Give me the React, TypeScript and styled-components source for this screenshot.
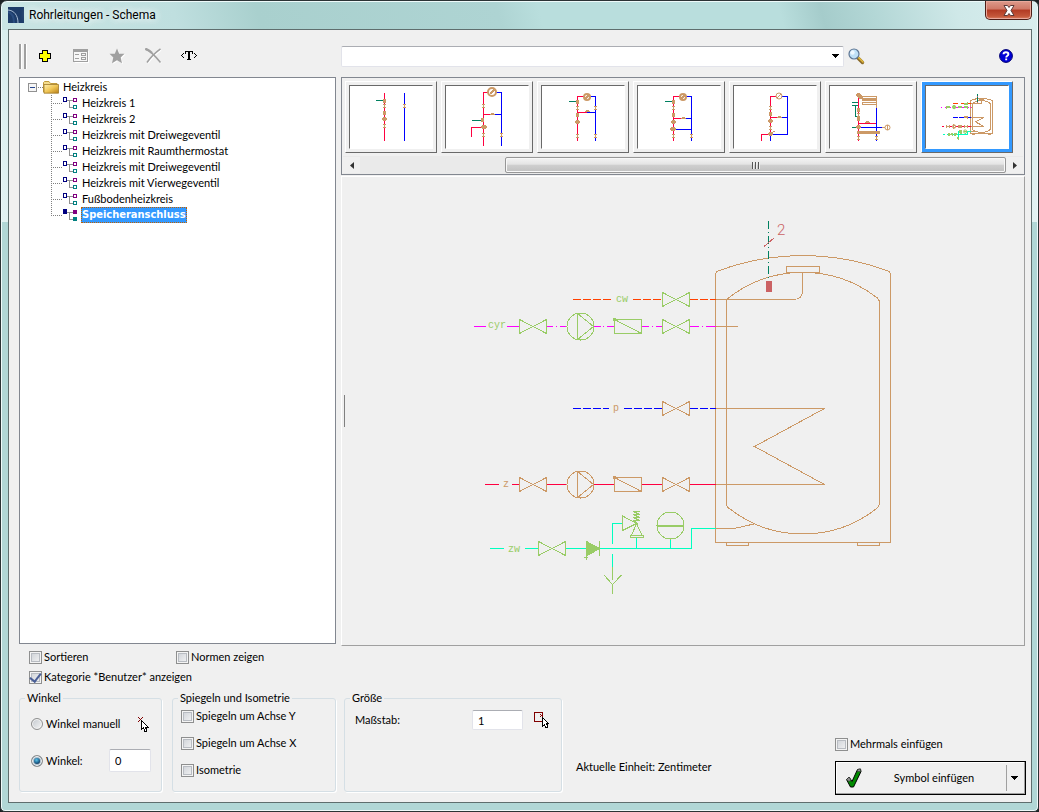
import React, { useState } from "react";
import styled, { createGlobalStyle, css } from "styled-components";

const TAN = "#cc9966";
const GREEN = "#99cc66";
const RED = "#ff0040";
const BLUE = "#0000ff";
const CYAN = "#00ffc0";
const PINE = "#008060";
const MAGENTA = "#ff00ff";
const ORANGE = "#ff4000";
const ROSE = "#cb6264";

const GlobalStyle = createGlobalStyle`
  * { box-sizing: border-box; }
  body {
    margin: 0;
    background: #1c2224;
    color: #000;
    font: 11px/16px Lato, "Liberation Sans", sans-serif;
  }
  button, input { font: inherit; color: inherit; }
`;

/* ---------- window frame ---------- */

const Window = styled.div`
  min-height: 100vh;
  display: flex;
  flex-direction: column;
  padding: 0 6px 8px 7px;
  border: 1px solid #2b3335;
  border-radius: 7px 7px 5px 5px;
  box-shadow: inset 0 0 0 1px #eefafa;
  background:
    linear-gradient(#d9eeee, #e2f2f2 192px, transparent 193px) 0 29px / 7px 192px no-repeat,
    linear-gradient(#d9eeee, #e2f2f2 192px, transparent 193px) 100% 29px / 7px 192px no-repeat,
    linear-gradient(75deg, #c9e5e4 0, #bfdfdf 17%, #a9d0ce 25%, #aed4d3 48%, #b9dedd 52%, #b9dedd 75%, #a5cccb 79%, #b3d7d6 84%, #cfe8e8 92%, #d9eeee 100%) 0 0 / 100% 29px no-repeat,
    #b1d7d6;
`;

const TitleBar = styled.header`
  height: 28px;
  display: flex;
  align-items: center;
  gap: 5px;
`;

const Title = styled.h1`
  flex: 1;
  margin: 0;
  font: 12px/20px Roboto, "Open Sans", sans-serif;
  text-shadow: 0 0 8px #fff, 0 0 8px #fff;
`;

const CloseButton = styled.button`
  align-self: flex-start;
  width: 47px;
  height: 19px;
  padding: 0;
  display: grid;
  place-items: center;
  border: 1px solid #4d1d16;
  border-top: 0;
  border-radius: 0 0 5px 5px;
  box-shadow: inset 0 0 0 1px #e9a99c;
  background: linear-gradient(#dd9a8b, #cf7867 45%, #b23a23 50%, #c4573a 85%, #dc8264);
`;

const Client = styled.main`
  flex: 1;
  display: flex;
  flex-direction: column;
  padding: 13px 6px 10px 10px;
  border: 1px solid #5f6e6e;
  background: #f0f0f0;
`;

/* ---------- header: tools and search ---------- */

const columns = css`
  display: grid;
  grid-template-columns: 317px minmax(0, 1fr);
  column-gap: 5px;
`;

const Header = styled.div`
  ${columns}
  height: 34px;
`;

const Toolbar = styled.div`
  display: flex;
  align-items: center;
  height: 26px;
  gap: 12px;
`;

const Grip = styled.span`
  width: 7px;
  height: 25px;
  margin-right: -5px;
  border: solid #a0a0a0;
  border-width: 0 2px;
  box-shadow: inset 1px 0 #fff, 1px 0 #fff;
`;

const IconButton = styled.button`
  width: 24px;
  height: 24px;
  padding: 0;
  display: grid;
  place-items: center;
  border: 0;
  background: none;
`;

const HelpButton = styled(IconButton)`
  margin-left: auto;
`;

const SearchBar = styled.div`
  display: flex;
  align-items: center;
  height: 26px;
  padding-right: 7px;
`;

const Combo = styled.div`
  flex: 1;
  max-width: 503px;
  height: 21px;
  display: flex;
  border: 1px solid #e2e3ea;
  border-top-color: #abadb3;
  border-radius: 2px;
  background: #fff;
`;

const ComboInput = styled.input`
  flex: 1;
  min-width: 0;
  border: 0;
  padding: 0 4px;
  background: none;
`;

const ComboArrow = styled.button`
  width: 17px;
  padding: 0;
  display: grid;
  place-items: center;
  border: 0;
  background: none;
`;

/* ---------- tree ---------- */

const Body = styled.div`
  ${columns}
  flex: 1;
`;

const TreePanel = styled.nav`
  margin-bottom: 2px;
  padding: 1px 8px;
  border: 1px solid #828790;
  background: #fff;
`;

const TreeRoot = styled.div`
  display: flex;
  align-items: center;
  height: 16px;
`;

const RootLabel = styled.span`
  padding-left: 4px;
`;

const TreeList = styled.ul`
  margin: 0;
  padding: 0 0 0 23px;
  list-style: none;
`;

const TreeRow = styled.li`
  display: flex;
  align-items: center;
  height: 16px;
  gap: 3px;
`;

const TreeLabel = styled.button<{ $selected: boolean }>`
  height: 16px;
  padding: 0 1px;
  border: 0;
  background: none;
  line-height: 16px;
  white-space: nowrap;
  ${(p) =>
    p.$selected &&
    css`
      background: #3399ff;
      color: #fff;
      font-family: "DejaVu Sans Condensed", "DejaVu Sans", sans-serif;
      font-weight: bold;
      outline: 1px dotted #c06000;
      outline-offset: -1px;
    `}
`;

/* ---------- thumbnails and preview ---------- */

const RightColumn = styled.section`
  display: flex;
  flex-direction: column;
  gap: 1px;
  min-width: 0;
`;

const ThumbPanel = styled.div`
  padding: 3px 1px 0;
  border: 1px solid #828790;
`;

const ThumbRow = styled.div`
  display: flex;
  gap: 4px;
  padding: 0 2px;
  overflow: hidden;
`;

const Thumb = styled.button<{ $selected: boolean }>`
  flex: none;
  width: 92px;
  height: 72px;
  padding: 3px;
  display: block;
  border: 1px solid;
  border-color: #fff #696969 #696969 #fff;
  background: ${(p) => (p.$selected ? "#3399ff" : "#f0f0f0")};
`;

const ThumbImage = styled.span`
  display: block;
  height: 64px;
  border: 1px solid;
  border-color: #696969 #fff #fff #696969;
  background: #fff;

  svg { display: block; }
`;

const ScrollBar = styled.div`
  display: flex;
  height: 18px;
  margin-top: 3px;
  padding: 1px 0;
  background: #eaeaea;
`;

const ScrollArrow = styled.button`
  width: 17px;
  padding: 0;
  display: grid;
  place-items: center;
  border: 0;
  background: #f0f0f0;
`;

const ScrollTrack = styled.div`
  flex: 1;
  display: flex;
  justify-content: flex-end;
`;

const ScrollThumb = styled.div`
  width: 77.5%;
  display: grid;
  place-items: center;
  border: 1px solid #979797;
  border-radius: 2px;
  box-shadow: inset 0 0 0 1px #f8f8f8;
  background: linear-gradient(#f4f4f4, #e4e4e4 45%, #cfcfcf 50%, #c0c0c0);
`;

const Preview = styled.div`
  flex: 1;
  display: flex;
  align-items: center;
  padding-left: 2px;
  border: 1px solid;
  border-color: #fff #a0a0a0 #a0a0a0 #fff;
`;

const Splitter = styled.span`
  width: 1px;
  height: 32px;
  background: #808080;
`;

const PreviewArea = styled.div`
  flex: 1;
  display: flex;
  justify-content: center;
`;

/* ---------- options ---------- */

const Options = styled.form`
  padding-top: 3px;
`;

const CheckGrid = styled.div`
  display: grid;
  grid-template-columns: 147px auto;
  justify-content: start;
  grid-auto-rows: 16px;
  row-gap: 4px;
  padding-left: 10px;
  margin-bottom: 6px;
`;

const Choice = styled.label`
  display: flex;
  align-items: center;
  gap: 2px;
  white-space: nowrap;
`;

const RadioChoice = styled(Choice)`
  gap: 3px;
`;

const Check = styled.input.attrs({ type: "checkbox" })`
  appearance: none;
  flex: none;
  display: grid;
  place-content: center;
  width: 13px;
  height: 13px;
  margin: 0;
  border: 1px solid #8e8f8f;
  box-shadow: inset 0 0 0 1px #f4f4f4, inset 0 0 0 2px #b8bcc2;
  background: linear-gradient(135deg, #cbcfd5, #f6f6f6);

  &:checked::after {
    content: "";
    width: 5px;
    height: 9px;
    margin-bottom: 2px;
    border: solid #4a5f97;
    border-width: 0 2px 2px 0;
    transform: rotate(38deg);
  }
`;

const Radio = styled.input.attrs({ type: "radio" })`
  appearance: none;
  flex: none;
  width: 12px;
  height: 12px;
  margin: 0;
  border: 1px solid #8e8f8f;
  border-radius: 50%;
  box-shadow: inset 0 0 0 1px #f4f4f4;
  background: linear-gradient(135deg, #c3c8ce, #f6f6f6);

  &:checked {
    box-shadow: inset 0 0 0 1px #f4f4f4, inset 0 0 0 2px #a9bccb;
    background: radial-gradient(circle at 45% 40%, #5cc4ea 0, #1a5f8c 3px, #12385a 4px);
  }
`;

const Bottom = styled.div`
  display: flex;
  align-items: stretch;
`;

const Group = styled.fieldset<{ $width: number; $gap: number }>`
  flex: none;
  width: ${(p) => p.$width}px;
  height: 101px;
  margin: 0 ${(p) => p.$gap}px 0 0;
  padding: 0 10px 0 8px;
  border: 1px solid #d5dfe5;
  border-radius: 3px;
  box-shadow: 1px 1px #fff;
`;

const Legend = styled.legend`
  height: 14px;
  margin-left: -3px;
  padding: 0 2px;
  line-height: 14px;
`;

const Row = styled.div`
  display: flex;
  align-items: center;
  justify-content: space-between;
`;

const AngleRows = styled.div`
  display: flex;
  flex-direction: column;
  gap: 16px;
  padding: 10px 0 0 3px;
`;

const MirrorRows = styled.div`
  display: flex;
  flex-direction: column;
  gap: 11px;
  padding-top: 3px;
`;

const SizeRow = styled.div`
  display: flex;
  align-items: center;
  padding: 5px 0 0 2px;
`;

const SizeLabel = styled.label`
  flex: 1;
`;

const NumberField = styled.input<{ $width: number; $height: number }>`
  width: ${(p) => p.$width}px;
  height: ${(p) => p.$height}px;
  padding: 0 5px;
  border: 1px solid #e2e3ea;
  border-top-color: #abadb3;
  border-radius: 2px;
  background: #fff;
`;

const PickButton = styled.button`
  width: 18px;
  height: 18px;
  padding: 0;
  display: grid;
  place-items: center;
  border: 0;
  background: none;
`;

const SizePick = styled(PickButton)`
  margin-left: 10px;
`;

const UnitText = styled.p`
  flex: 1;
  margin: 68px 0 0;
`;

const Actions = styled.div`
  flex: none;
  width: 191px;
  display: flex;
  flex-direction: column;
  justify-content: flex-end;
  gap: 9px;
  margin: 0 -1px -3px 0;
`;

const SplitButton = styled.div`
  height: 34px;
  display: flex;
  align-items: center;
  border: 1px solid #000;
  box-shadow: inset -1px -1px #a0a0a0, inset 1px 1px #fff;
`;

const InsertButton = styled.button`
  flex: 1;
  align-self: stretch;
  display: flex;
  align-items: center;
  padding: 0 0 0 9px;
  border: 0;
  background: none;
`;

const InsertLabel = styled.span`
  flex: 1;
  text-align: center;
`;

const MoreButton = styled.button`
  width: 19px;
  height: 26px;
  padding: 0 4px 0 0;
  display: grid;
  place-items: center;
  border: 0;
  border-left: 1px solid #a0a0a0;
  background: none;
`;

/* ---------- icons ---------- */

const CaretDown = () => (
  <svg width="8" height="4" viewBox="0 0 8 4" shapeRendering="crispEdges">
    <path d="M0 0H8L4 4Z" fill="#000" />
  </svg>
);

const AppIcon = () => (
  <svg width="16" height="16" viewBox="0 0 16 16">
    <rect width="16" height="16" fill="#1d3c69" />
    <path d="M0 5C4 6 6 10 6 16" fill="none" stroke="#2a4d80" strokeWidth="2" />
    <path d="M0 3C6 3.500 10 8 10 16" fill="none" stroke="#a9bdd6" strokeWidth="1" />
  </svg>
);

const CloseIcon = () => (
  <svg width="12" height="11" viewBox="0 0 12 11">
    <path d="M1 .5H4.500L6 2.500 7.500 .5H11L8 5.500 11 10.500H7.500L6 8.500 4.500 10.500H1L4 5.500Z" fill="#fff" stroke="#5b3a38" strokeWidth="1" />
  </svg>
);

const PlusIcon = () => (
  <svg width="14" height="14" viewBox="0 0 14 14" shapeRendering="crispEdges">
    <path d="M4.500 1.500H9.500V4.500H12.500V9.500H9.500V12.500H4.500V9.500H1.500V4.500H4.500Z" fill="#ffff00" stroke="#000" />
  </svg>
);

const FormIcon = () => (
  <svg width="16" height="14" viewBox="0 0 16 14" shapeRendering="crispEdges">
    <path d="M2 13.500H15.500V2" fill="none" stroke="#fff" />
    <rect x=".5" y=".5" width="14" height="12" fill="#f6f6f6" stroke="#a0a0a0" />
    <path d="M1 1.500H14" stroke="#a0a0a0" strokeWidth="2" />
    <path d="M2 5.500H6M2 9.500H6" stroke="#a0a0a0" />
    <path d="M8.500 4.500H12.500V6.500H8.500ZM8.500 8.500H12.500V10.500H8.500Z" fill="none" stroke="#a0a0a0" />
  </svg>
);

const StarIcon = () => (
  <svg width="17" height="17" viewBox="0 0 17 17">
    <path d="M9 1.500 11 6.500H16.500L12.500 10.500 14 16 9 13 4 16 5.500 10.500 1.500 6.500H7Z" fill="#fff" />
    <path d="M8 .5 10.200 5.800H15.500L11.700 9.500 13 15.200 8 12.200 3 15.200 4.300 9.500 .5 5.800H5.800Z" fill="#a0a0a0" />
  </svg>
);

const DeleteIcon = () => (
  <svg width="17" height="16" viewBox="0 0 17 16" fill="none">
    <path d="M2 2Q8 5 16 15M16 2Q8 8 3 15" stroke="#fff" strokeWidth="1.500" />
    <path d="M.5 .8Q7 4 15.500 14.500" stroke="#a0a0a0" strokeWidth="1.600" />
    <path d="M.3 .8Q4 2 7 5" stroke="#a0a0a0" strokeWidth="2.400" />
    <path d="M15.500 .8Q7 7 2 14.500" stroke="#a0a0a0" strokeWidth="1.600" />
  </svg>
);

const TextIcon = () => (
  <svg width="16" height="10" viewBox="0 0 16 10" shapeRendering="crispEdges" fill="#000">
    <path d="M2 2H3V3H2V4H1V5H2V6H3V7H2V6H1V5H0V4H1V3H2ZM13 2H14V3H15V4H16V5H15V6H14V7H13V6H14V5H15V4H14V3H13Z" />
    <path d="M4 0H12V3H11V1H9V8H10V9H6V8H7V1H5V3H4Z" />
  </svg>
);

const SearchIcon = () => (
  <svg width="17" height="17" viewBox="0 0 17 17">
    <path d="M9.500 9.500 14.500 14.500" stroke="#8a6a28" strokeWidth="3.400" strokeLinecap="round" />
    <path d="M10.500 9.500 15 14" stroke="#e2b93c" strokeWidth="1.600" strokeLinecap="round" />
    <circle cx="6" cy="6" r="5" fill="#bfe0f6" stroke="#5e7694" strokeWidth="1.200" />
    <circle cx="4.500" cy="4.500" r="2.200" fill="#eef8ff" />
  </svg>
);

const HelpIcon = () => (
  <svg width="14" height="14" viewBox="0 0 14 14">
    <circle cx="7" cy="7" r="6.400" fill="#0000d8" stroke="#000070" />
    <path d="M4.500 5.300C4.500 2.600 9.400 2.700 9.400 5.200 9.400 6.800 7.200 6.600 7.200 8.400M7.200 9.500V11.200" fill="none" stroke="#fff" strokeWidth="1.900" />
  </svg>
);

const ExpanderIcon = () => (
  <svg width="15" height="16" viewBox="0 0 15 16" shapeRendering="crispEdges">
    <rect x=".5" y="4.500" width="8" height="8" rx="1" fill="#f6f6f6" stroke="#919191" />
    <path d="M2 8.500H7" stroke="#28478f" />
    <path d="M10 8.500H15" stroke="#808080" strokeDasharray="1 1" />
  </svg>
);

const FolderIcon = () => (
  <svg width="16" height="13" viewBox="0 0 16 13">
    <defs>
      <linearGradient id="folder" x1="0" y1="0" x2="1" y2="1">
        <stop offset="0" stopColor="#fff0b0" />
        <stop offset=".5" stopColor="#f0c656" />
        <stop offset="1" stopColor="#b87f18" />
      </linearGradient>
    </defs>
    <path d="M.5 11V1.500L1.500 .5H6L7.500 2.500H14V11Z" fill="#f5dd8e" stroke="#c09a3c" />
    <path d="M1 3.500H15.500V12.200H1Z" fill="url(#folder)" stroke="#a07a2c" strokeWidth=".8" />
  </svg>
);

const BranchIcon = ({ last }: { last: boolean }) => (
  <svg width="27" height="16" viewBox="0 0 27 16" shapeRendering="crispEdges" fill="none">
    <path d={last ? "M.5 0V9" : "M.5 0V16"} stroke="#808080" strokeDasharray="1 1" />
    <path d="M2 8.500H12" stroke="#808080" strokeDasharray="1 1" />
    <path d="M16 5.500H22M18.500 5.500V12.500H22" stroke="#909090" />
    <rect x="12.500" y="2.500" width="3" height="4" stroke="#000080" fill={last ? "#000080" : "#fff"} />
    <rect x="22.500" y="3.500" width="3" height="3" stroke="#800080" fill={last ? "#800080" : "#fff"} />
    <rect x="22.500" y="10.500" width="3" height="3" stroke="#008080" fill={last ? "#008080" : "#fff"} />
  </svg>
);

const PickAngleIcon = () => (
  <svg width="18" height="18" viewBox="0 0 18 18" shapeRendering="crispEdges">
    <path d="M5 2 10 7M10 2 5 7" stroke="#800000" />
    <path d="M8.500 5.500V14.500L10.500 13 12 16.500H13.500V14.500L12.500 12.500H15.500Z" fill="#fff" stroke="#000" />
  </svg>
);

const PickSizeIcon = () => (
  <svg width="18" height="18" viewBox="0 0 18 18" shapeRendering="crispEdges">
    <path d="M1.500 1.500H9.500V10.500H1.500Z" fill="none" stroke="#800000" />
    <path d="M7 3 10 6M10 3 7 6" stroke="#800000" />
    <path d="M9.500 6.500V15.500L11.500 14 13 16.500H14V13.500L13.500 12.500H15.500Z" fill="#fff" stroke="#000" />
  </svg>
);

const TickIcon = () => (
  <svg width="17" height="21" viewBox="0 0 17 21">
    <path d="M1.500 11.500 4 9 7 13.500 12.500 1.500 15.500 1 16 3.500 8.500 19H5.500Z" fill="#008a00" stroke="#000" />
    <path d="M1.500 11.500 4 9 6 12 4 13.500ZM12.500 1.500 15.500 1 15.500 3.500 12.500 3.500Z" fill="#8f8f8f" stroke="#333" strokeWidth=".6" />
  </svg>
);

/* ---------- schema drawing ---------- */

type Point = { x: number; y: number };

const Valve = ({ x, y, color }: Point & { color: string }) => (
  <path d={`M${x} ${y - 7}V${y + 7}L${x + 27} ${y - 7}V${y + 7}Z`} stroke={color} />
);

const Pump = ({ x, y, color }: Point & { color: string }) => (
  <g stroke={color}>
    <circle cx={x} cy={y} r="13.500" />
    <path d={`M${x - 3} ${y - 13}V${y + 13}L${x + 13} ${y}Z`} />
  </g>
);

const CheckFlap = ({ x, y, color }: Point & { color: string }) => (
  <g stroke={color}>
    <path d={`M${x} ${y - 7}H${x + 27}V${y + 7}H${x}ZL${x + 27} ${y + 7}`} />
    <rect x={x - 1} y={y - 8} width="2" height="2" />
  </g>
);

const Schema = () => (
  <g fill="none">
    <g stroke={TAN}>
      <path d="M715.500 542.500V274Q715.500 272 718 271A243 243 0 0 1 888 271Q890.500 272 890.500 275V542.500Z" />
      <path d="M726.500 299.500A121 121 0 0 1 876 297Q879.500 299 879.500 303V504Q879 507 876 509A119 119 0 0 1 730 509Q726.500 507 726.500 504Z" />
      <path d="M786.500 272.500V266.500H819.500V272.500Z" fill="#f0f0f0" />
      <path d="M715.500 299.500H794Q802.500 299 802.500 291V272.500" />
      <path d="M715.500 326.500H738M715.500 408.500H824.500L754.500 446.500 824.500 484.500H715.500M715.500 528.500H734L754 524" />
      <path d="M726.500 542.500V545.500H748.500V542.500M857.500 542.500V545.500H879.500V542.500" />
    </g>

    <path d="M768.500 221V281" stroke={PINE} strokeDasharray="8 3 1 3" />
    <path d="M764 246.500 774 238" stroke={ROSE} />
    <rect x="766" y="281" width="6" height="11" fill={ROSE} />

    <path d="M573 299.500H612M633 299.500H662M690 299.500H716" stroke={ORANGE} strokeDasharray="8 2" />
    <Valve x={662.5} y={299.5} color={GREEN} />

    <path d="M474 326.500H486M507 326.500H519M547 326.500H553M556 326.500H557M560 326.500H567M594 326.500H601M603 326.500H604M607 326.500H614M642 326.500H649M652 326.500H653M656 326.500H662M690 326.500H699M702 326.500H703M706 326.500H716" stroke={MAGENTA} />
    <Valve x={519.5} y={326.5} color={GREEN} />
    <Pump x={580.5} y={326.5} color={GREEN} />
    <CheckFlap x={614.5} y={326.5} color={GREEN} />
    <Valve x={662.5} y={326.5} color={GREEN} />

    <path d="M573 408.500H609M624 408.500H662M690 408.500H716" stroke={BLUE} strokeDasharray="8 2" />
    <Valve x={662.5} y={408.5} color={TAN} />

    <path d="M485 484.500H499M512 484.500H519M547 484.500H567M594 484.500H614M642 484.500H662M690 484.500H716" stroke={RED} />
    <Valve x={519.5} y={484.5} color={TAN} />
    <Pump x={580.5} y={484.5} color={TAN} />
    <CheckFlap x={614.5} y={484.5} color={TAN} />
    <Valve x={662.5} y={484.5} color={TAN} />

    <path d="M490 548.500H504M525 548.500H538M566 548.500H586M600 548.500H691.500V528.500H716M612.500 543.500V523.500H622M612.500 554V567M636.500 538V548M670.500 540V548" stroke={CYAN} />
    <g stroke={GREEN}>
      <Valve x={538.5} y={548.5} color={GREEN} />
      <path d="M586.500 541.500V556L599.500 548.500Z" fill={GREEN} />
      <path d="M599.500 541V556M586.500 556V560M584 557.500H588" />
      <path d="M612.500 567V580M604 575 612.500 584.500 621.500 575M612.500 584V594" />
      <path d="M622.500 516V530.500L636.500 523.500Z" />
      <path d="M636.500 523.500 631.500 535.500H642L636.500 523.500M630.500 535.500H643.500V537.500H630.500Z" />
      <path d="M640 511.500H633L640 514.500H633L640 517.500H633L640 520.500H634L637 523.500" />
      <circle cx="670.500" cy="525.500" r="13.500" />
      <path d="M657 525.500H684M657 526.500H684" />
    </g>
  </g>
);

const SchemaText = styled.text`
  font: 10px "Liberation Mono", monospace;
`;

const CountText = styled.text`
  font: 300 15px Roboto, sans-serif;
`;

const SchemaDrawing = () => (
  <svg width="421" height="382" viewBox="474 220 421 382" role="img" aria-label="Speicheranschluss">
    <g shapeRendering="crispEdges">
      <Schema />
    </g>
    <CountText x="777" y="235" fill={ROSE}>2</CountText>
    <SchemaText x="616" y="302" fill={GREEN}>cw</SchemaText>
    <SchemaText x="488" y="328" fill={GREEN}>cyr</SchemaText>
    <SchemaText x="613" y="411" fill={TAN}>p</SchemaText>
    <SchemaText x="503" y="487" fill={TAN}>z</SchemaText>
    <SchemaText x="508" y="552" fill={GREEN}>zw</SchemaText>
  </svg>
);

const MiniSvg = styled.svg`
  fill: none;
  shape-rendering: crispEdges;

  circle { shape-rendering: auto; }
`;

const ScaledSchema = styled.g`
  * { vector-effect: non-scaling-stroke; }
`;

/* small fittings: v = valve, s = square, c = round valve, h = half dome */
const Fittings = ({ items }: { items: [string, number, number][] }) => (
  <g fill={TAN}>
    {items.map(([kind, x, y], i) => {
      if (kind === "v") return <path key={i} d={`M${x - 1} ${y - 2}h3v1h-3zM${x - 1} ${y + 1}h3v1h-3zM${x} ${y - 1}h1v2h-1z`} />;
      if (kind === "s") return <rect key={i} x={x - 1} y={y - 2} width="3" height="4" />;
      if (kind === "h") return <path key={i} d={`M${x - 2} ${y}h5v-1h-1v-1h-3v1h-1z`} />;
      return <path key={i} d={`M${x - 1} ${y - 2}h3v1h1v2h-1v1h-3v-1h-1v-2h1z`} />;
    })}
  </g>
);

const MiniPump = ({ x, y, r }: Point & { r: number }) => (
  <g stroke={TAN}>
    <circle cx={x} cy={y} r={r} fill="#fff" strokeWidth="2" />
    <path d={`M${x - 2} ${y + 2}L${x + 2} ${y - 2}`} strokeWidth="2" />
  </g>
);

const miniatures: React.ReactNode[] = [
  <>
    <path d="M34.500 7V55" stroke={RED} />
    <path d="M54.500 7V55" stroke={BLUE} />
    <path d="M26 14.500H34" stroke={PINE} />
    <Fittings items={[["s", 34, 15], ["v", 34, 20], ["s", 34, 27], ["c", 34, 33], ["v", 34, 40], ["v", 54, 20]]} />
  </>,
  <>
    <path d="M46 6.500H37.500V60M37 28.500H46M37 41.500H25.500V51" stroke={RED} />
    <path d="M46 6.500H55.500V60M46 28.500H55" stroke={BLUE} />
    <path d="M26 34.500H35" stroke={PINE} />
    <MiniPump x={46} y={6} r={4} />
    <Fittings items={[["v", 37, 20], ["h", 46, 29], ["s", 36, 34], ["c", 37, 41], ["c", 38, 41], ["v", 37, 49], ["v", 55, 49]]} />
  </>,
  <>
    <path d="M45 10.500H35.500V55M35 26.500H45" stroke={RED} />
    <path d="M45 10.500H53.500V55M45 26.500H53" stroke={BLUE} />
    <path d="M27 15.500H35" stroke={PINE} />
    <MiniPump x={45} y={11} r={3} />
    <Fittings items={[["s", 35, 16], ["v", 35, 22], ["v", 53, 22], ["h", 45, 26], ["s", 35, 29], ["c", 35, 36], ["v", 35, 50], ["v", 53, 50]]} />
  </>,
  <>
    <path d="M45 10.500H35.500V55M35 32.500H45" stroke={RED} />
    <path d="M45 10.500H53.500V55M45 32.500H53M35 43.500H53" stroke={BLUE} />
    <path d="M27 15.500H35" stroke={PINE} />
    <MiniPump x={45} y={11} r={3} />
    <Fittings items={[["s", 35, 16], ["v", 35, 22], ["h", 45, 33], ["s", 35, 29], ["c", 35, 36], ["c", 35, 43], ["c", 34, 43], ["v", 35, 50], ["v", 53, 50]]} />
  </>,
  <>
    <path d="M45 10.500H36.500V48.500H27.500V55M36 31.500H45" stroke={RED} />
    <path d="M45 10.500H53.500V48.500H36.500V55M45 31.500H53" stroke={BLUE} />
    <circle cx="45" cy="10" r="3" fill="#fff" stroke={TAN} />
    <path d="M43 12 47 8" stroke={TAN} />
    <Fittings items={[["v", 36, 22], ["s", 36, 28], ["c", 36, 35], ["h", 45, 32], ["v", 36, 42], ["c", 36, 48]]} />
    <path d="M36 48 41 45" stroke={TAN} />
  </>,
  <>
    <path d="M28.500 8V55M28 37.500H46" stroke={RED} />
    <path d="M46.500 22V55M28 41.500H55" stroke={BLUE} />
    <path d="M22 16.500H28M22 19.500H28M25.500 19V30M25 30.500H28M22 41.500H28" stroke={PINE} />
    <path d="M29 8V10.500H46.500V22M32 13.500H46M32 14.500H46M32 12.500H46M46 16.500H32V18.500H46" stroke={TAN} />
    <path d="M27 45H49V47H27Z" fill={TAN} stroke={TAN} />
    <circle cx="57.500" cy="41.500" r="2.500" stroke={TAN} />
    <path d="M52 41.500H55M57.500 39V44" stroke={TAN} />
    <Fittings items={[["c", 28, 9], ["c", 30, 11], ["s", 28, 24], ["s", 28, 33], ["v", 28, 29], ["h", 37, 37], ["c", 28, 41], ["v", 28, 52], ["v", 46, 52]]} />
  </>,
  <ScaledSchema transform="translate(15 8) scale(.123) translate(-474 -220)">
    <Schema />
  </ScaledSchema>,
];

const entries = [
  "Heizkreis 1",
  "Heizkreis 2",
  "Heizkreis mit Dreiwegeventil",
  "Heizkreis mit Raumthermostat",
  "Heizkreis mit Dreiwegeventil",
  "Heizkreis mit Vierwegeventil",
  "Fußbodenheizkreis",
  "Speicheranschluss",
];

export default function App() {
  const [angle, setAngle] = useState("0");
  const [scale, setScale] = useState("1");

  return (
    <>
      <GlobalStyle />
      <Window>
        <TitleBar>
          <AppIcon />
          <Title>Rohrleitungen - Schema</Title>
          <CloseButton aria-label="Schließen">
            <CloseIcon />
          </CloseButton>
        </TitleBar>

        <Client>
          <Header>
            <Toolbar>
              <Grip />
              <IconButton aria-label="Neu"><PlusIcon /></IconButton>
              <IconButton aria-label="Eigenschaften"><FormIcon /></IconButton>
              <IconButton aria-label="Favorit"><StarIcon /></IconButton>
              <IconButton aria-label="Löschen"><DeleteIcon /></IconButton>
              <IconButton aria-label="Text"><TextIcon /></IconButton>
            </Toolbar>
            <SearchBar>
              <Combo>
                <ComboInput aria-label="Suche" />
                <ComboArrow aria-label="Liste öffnen"><CaretDown /></ComboArrow>
              </Combo>
              <IconButton aria-label="Suchen"><SearchIcon /></IconButton>
              <HelpButton aria-label="Hilfe"><HelpIcon /></HelpButton>
            </SearchBar>
          </Header>

          <Body>
            <TreePanel>
              <TreeRoot>
                <ExpanderIcon />
                <FolderIcon />
                <RootLabel>Heizkreis</RootLabel>
              </TreeRoot>
              <TreeList>
                {entries.map((name, i) => {
                  const last = i === entries.length - 1;
                  return (
                    <TreeRow key={i}>
                      <BranchIcon last={last} />
                      <TreeLabel $selected={last}>{name}</TreeLabel>
                    </TreeRow>
                  );
                })}
              </TreeList>
            </TreePanel>

            <RightColumn>
              <ThumbPanel>
                <ThumbRow>
                  {miniatures.map((drawing, i) => (
                    <Thumb key={i} $selected={i === 6} aria-label={`Variante ${i + 1}`}>
                      <ThumbImage>
                        <MiniSvg width="82" height="62" viewBox="0 0 82 62">{drawing}</MiniSvg>
                      </ThumbImage>
                    </Thumb>
                  ))}
                </ThumbRow>
                <ScrollBar>
                  <ScrollArrow aria-label="Nach links">
                    <svg width="4" height="7" viewBox="0 0 4 7"><path d="M4 0V7L0 3.500Z" fill="#333" /></svg>
                  </ScrollArrow>
                  <ScrollTrack>
                    <ScrollThumb>
                      <svg width="8" height="7" viewBox="0 0 8 7" shapeRendering="crispEdges">
                        <path d="M.5 0V7M3.500 0V7M6.500 0V7" stroke="#555" />
                        <path d="M1.500 0V7M4.500 0V7M7.500 0V7" stroke="#eee" />
                      </svg>
                    </ScrollThumb>
                  </ScrollTrack>
                  <ScrollArrow aria-label="Nach rechts">
                    <svg width="4" height="7" viewBox="0 0 4 7"><path d="M0 0V7L4 3.500Z" fill="#333" /></svg>
                  </ScrollArrow>
                </ScrollBar>
              </ThumbPanel>
              <Preview>
                <Splitter />
                <PreviewArea>
                  <SchemaDrawing />
                </PreviewArea>
              </Preview>
            </RightColumn>
          </Body>

          <Options onSubmit={(e) => e.preventDefault()}>
            <CheckGrid>
              <Choice><Check />Sortieren</Choice>
              <Choice><Check />Normen zeigen</Choice>
              <Choice><Check defaultChecked />Kategorie *Benutzer* anzeigen</Choice>
            </CheckGrid>
            <Bottom>
              <Group $width={143} $gap={10}>
                <Legend>Winkel</Legend>
                <AngleRows>
                  <Row>
                    <RadioChoice><Radio name="angle" />Winkel manuell</RadioChoice>
                    <PickButton type="button" aria-label="Winkel wählen"><PickAngleIcon /></PickButton>
                  </Row>
                  <Row>
                    <RadioChoice><Radio name="angle" defaultChecked />Winkel:</RadioChoice>
                    <NumberField $width={42} $height={23} aria-label="Winkel" value={angle} onChange={(e) => setAngle(e.target.value)} />
                  </Row>
                </AngleRows>
              </Group>
              <Group $width={164} $gap={8}>
                <Legend>Spiegeln und Isometrie</Legend>
                <MirrorRows>
                  <Choice><Check />Spiegeln um Achse Y</Choice>
                  <Choice><Check />Spiegeln um Achse X</Choice>
                  <Choice><Check />Isometrie</Choice>
                </MirrorRows>
              </Group>
              <Group $width={218} $gap={14}>
                <Legend>Größe</Legend>
                <SizeRow>
                  <SizeLabel htmlFor="scale">Maßstab:</SizeLabel>
                  <NumberField id="scale" $width={51} $height={20} value={scale} onChange={(e) => setScale(e.target.value)} />
                  <SizePick type="button" aria-label="Maßstab wählen"><PickSizeIcon /></SizePick>
                </SizeRow>
              </Group>
              <UnitText>Aktuelle Einheit: Zentimeter</UnitText>
              <Actions>
                <Choice><Check />Mehrmals einfügen</Choice>
                <SplitButton>
                  <InsertButton type="submit">
                    <TickIcon />
                    <InsertLabel>Symbol einfügen</InsertLabel>
                  </InsertButton>
                  <MoreButton type="button" aria-label="Weitere Optionen"><CaretDown /></MoreButton>
                </SplitButton>
              </Actions>
            </Bottom>
          </Options>
        </Client>
      </Window>
    </>
  );
}
